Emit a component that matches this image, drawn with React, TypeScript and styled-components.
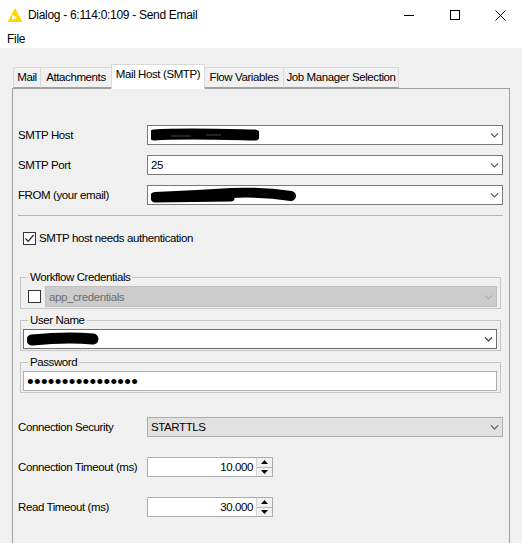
import React from 'react';
import styled, { createGlobalStyle } from 'styled-components';

const GlobalStyle = createGlobalStyle`
  html, body {
    margin: 0;
    padding: 0;
    background: #f0f0f0;
  }
  body {
    font-family: "Liberation Sans", Arial, sans-serif;
    font-size: 11.5px;
    letter-spacing: -0.4px;
    color: #000;
  }
  * {
    box-sizing: border-box;
  }
`;

const Window = styled.div`
  width: 522px;
  height: 543px;
  overflow: hidden;
  display: flex;
  flex-direction: column;
  background: #f0f0f0;
`;

const TitleBar = styled.div`
  height: 30px;
  flex-shrink: 0;
  background: #fff;
  display: flex;
  align-items: center;
`;

const AppIcon = styled.svg`
  width: 16px;
  height: 16px;
  margin-left: 7px;
  flex-shrink: 0;
`;

const Title = styled.div`
  margin-left: 5px;
  font-size: 12px;
  letter-spacing: -0.3px;
`;

const Controls = styled.div`
  margin-left: auto;
  display: flex;
  height: 100%;
`;

const ControlButton = styled.div<{ $w: number }>`
  width: ${(p) => p.$w}px;
  height: 100%;
  display: flex;
  align-items: center;
  justify-content: center;
`;

const MenuBar = styled.div`
  height: 18px;
  flex-shrink: 0;
  background: #fff;
  display: flex;
  align-items: center;
  padding-left: 7px;
  font-size: 12px;
  letter-spacing: -0.3px;
`;

const Body = styled.div`
  flex: 1;
  overflow: hidden;
  padding: 16px 12px 0 12px;
`;

const TabRow = styled.div`
  display: flex;
  align-items: flex-end;
  height: 24px;
  padding-left: 1px;
  position: relative;
  z-index: 1;
`;

const Tab = styled.div<{ $w: number; $active?: boolean }>`
  width: ${(p) => p.$w}px;
  height: ${(p) => (p.$active ? 25 : 21)}px;
  margin-left: -1px;
  margin-bottom: ${(p) => (p.$active ? -1 : 0)}px;
  border: 1px solid #d9d9d9;
  border-bottom: ${(p) => (p.$active ? 'none' : '1px solid #a0a0a0')};
  background: ${(p) => (p.$active ? '#fff' : '#f0f0f0')};
  display: flex;
  justify-content: center;
  padding-top: 3px;
  white-space: nowrap;
  &:first-child {
    margin-left: 0;
  }
`;

const Panel = styled.div`
  height: 480px;
  border: 1px solid #a0a0a0;
  padding: 36px 6px 0 5px;
  display: flex;
  flex-direction: column;
`;

const Row = styled.div<{ $gap?: number }>`
  display: flex;
  align-items: center;
  height: 20px;
  margin-top: ${(p) => p.$gap ?? 0}px;
`;

const Label = styled.div`
  width: 129px;
  flex-shrink: 0;
  white-space: nowrap;
`;

const Combo = styled.div<{ $tone?: 'normal' | 'disabled' | 'readonly' | 'dark'; $h?: number }>`
  flex: 1;
  height: ${(p) => p.$h ?? 20}px;
  display: flex;
  align-items: center;
  padding-left: 3px;
  overflow: hidden;
  white-space: nowrap;
  border: 1px solid
    ${(p) =>
      p.$tone === 'disabled' ? '#bfbfbf' : p.$tone === 'readonly' ? '#adadad' : p.$tone === 'dark' ? '#6e6e6e' : '#7a7a7a'};
  background: ${(p) => (p.$tone === 'disabled' ? '#cccccc' : p.$tone === 'readonly' ? '#e1e1e1' : '#fff')};
  color: ${(p) => (p.$tone === 'disabled' ? '#6d6d6d' : '#000')};
`;

const ComboText = styled.div`
  flex: 1;
  display: flex;
  align-items: center;
`;

const Chevron = styled.svg`
  width: 9px;
  height: 6px;
  margin-right: 3px;
  flex-shrink: 0;
`;

const Separator = styled.div`
  margin-top: 10px;
  height: 1px;
  background: #b4b4b4;
`;

const CheckRow = styled.div<{ $gap?: number; $pad?: number }>`
  display: flex;
  align-items: center;
  margin-top: ${(p) => p.$gap ?? 0}px;
  padding-left: ${(p) => p.$pad ?? 0}px;
  white-space: nowrap;
`;

const Box = styled.div`
  width: 13px;
  height: 13px;
  border: 1px solid #333;
  background: #fff;
  flex-shrink: 0;
  display: flex;
  align-items: center;
  justify-content: center;
`;

const CheckLabel = styled.span`
  margin-left: 3px;
  line-height: 16px;
`;

const Group = styled.fieldset<{ $gap: number }>`
  margin: ${(p) => p.$gap}px 2px 0 2px;
  padding: 1px 3px 1px 2px;
  border: 1px solid #c6c6c6;
  min-width: 0;
`;

const Legend = styled.legend`
  margin-left: 5px;
  padding: 0 2px;
  line-height: 16px;
`;

const GroupRow = styled.div`
  display: flex;
  align-items: center;
`;

const SmallBox = styled(Box)`
  margin: 0 4px 0 5px;
`;

const TextField = styled.div`
  height: 20px;
  border: 1px solid #abadb3;
  background: #fff;
  display: flex;
  align-items: center;
  padding-left: 3px;
`;

const Dots = styled.span`
  font-size: 19px;
  letter-spacing: 0.3px;
  line-height: 18px;
  margin-top: 1px;
`;

const Spinner = styled.div`
  width: 126px;
  height: 20px;
  border: 1px solid #abadb3;
  background: #fff;
  display: flex;
`;

const SpinValue = styled.div`
  flex: 1;
  padding-right: 3px;
  display: flex;
  align-items: center;
  justify-content: flex-end;
`;

const SpinButtons = styled.div`
  width: 16px;
  display: flex;
  flex-direction: column;
  border-left: 1px solid #d4d4d4;
`;

const SpinButton = styled.div<{ $down?: boolean }>`
  flex: 1;
  background: #f0f0f0;
  border-bottom: ${(p) => (p.$down ? 'none' : '1px solid #b9b9b9')};
  display: flex;
  align-items: center;
  justify-content: center;
`;

const Scribble = styled.svg`
  display: block;
`;

const tabs = [
  { label: 'Mail', w: 28 },
  { label: 'Attachments', w: 72 },
  { label: 'Mail Host (SMTP)', w: 94, active: true },
  { label: 'Flow Variables', w: 80 },
  { label: 'Job Manager Selection', w: 116 },
];

const Arrow: React.FC<{ color?: string }> = ({ color = '#5a5a5a' }) => (
  <Chevron viewBox="0 0 9 6">
    <path d="M1 1.5 L4.5 5 L8 1.5" fill="none" stroke={color} strokeWidth="1.1" />
  </Chevron>
);

const Check = () => (
  <svg width="11" height="11" viewBox="0 0 11 11">
    <path d="M1.5 5.5 L4.2 8.3 L9.5 2" fill="none" stroke="#222" strokeWidth="1.2" />
  </svg>
);

const Spin: React.FC<{ value: string }> = ({ value }) => (
  <Spinner>
    <SpinValue>{value}</SpinValue>
    <SpinButtons>
      <SpinButton>
        <svg width="7" height="4" viewBox="0 0 7 4">
          <polygon points="0,4 3.5,0 7,4" fill="#000" />
        </svg>
      </SpinButton>
      <SpinButton $down>
        <svg width="7" height="4" viewBox="0 0 7 4">
          <polygon points="0,0 3.5,4 7,0" fill="#000" />
        </svg>
      </SpinButton>
    </SpinButtons>
  </Spinner>
);

const App: React.FC = () => {
  return (
    <Window>
      <GlobalStyle />
      <TitleBar>
        <AppIcon viewBox="0 0 16 16">
          <polygon points="0.5,15 8,1 15.5,15" fill="#ffd600" />
          <polygon points="5,8 5,13 10,10.5" fill="#fff" />
        </AppIcon>
        <Title>Dialog - 6:114:0:109 - Send Email</Title>
        <Controls>
          <ControlButton $w={46}>
            <svg width="10" height="10" viewBox="0 0 10 10">
              <line x1="0" y1="5.5" x2="10" y2="5.5" stroke="#000" strokeWidth="1" />
            </svg>
          </ControlButton>
          <ControlButton $w={46}>
            <svg width="10" height="10" viewBox="0 0 10 10">
              <rect x="0.5" y="0.5" width="9" height="9" fill="none" stroke="#000" strokeWidth="1" />
            </svg>
          </ControlButton>
          <ControlButton $w={44}>
            <svg width="11" height="11" viewBox="0 0 11 11">
              <path d="M0.5 0.5 L10.5 10.5 M10.5 0.5 L0.5 10.5" stroke="#000" strokeWidth="1" />
            </svg>
          </ControlButton>
        </Controls>
      </TitleBar>
      <MenuBar>File</MenuBar>
      <Body>
        <TabRow>
          {tabs.map((t) => (
            <Tab key={t.label} $w={t.w} $active={t.active}>
              {t.label}
            </Tab>
          ))}
        </TabRow>
        <Panel>
          <Row>
            <Label>SMTP Host</Label>
            <Combo>
              <ComboText>
                <Scribble width="108" height="14" viewBox="0 0 108 14">
                  <path d="M3 7 C30 5, 60 6, 104 7" stroke="#000" strokeWidth="11" strokeLinecap="round" fill="none" />
                  <path d="M20 8 L40 8 M55 7 L70 7" stroke="#444" strokeWidth="1" />
                </Scribble>
              </ComboText>
              <Arrow />
            </Combo>
          </Row>
          <Row $gap={10}>
            <Label>SMTP Port</Label>
            <Combo>
              <ComboText>25</ComboText>
              <Arrow />
            </Combo>
          </Row>
          <Row $gap={10}>
            <Label>FROM (your email)</Label>
            <Combo>
              <ComboText>
                <Scribble width="145" height="16" viewBox="0 0 145 16">
                  <path d="M4 10 C30 9, 50 8, 80 6 C100 5, 120 6, 140 9" stroke="#000" strokeWidth="10" strokeLinecap="round" fill="none" />
                  <path d="M4 12 L80 11" stroke="#000" strokeWidth="7" strokeLinecap="round" />
                </Scribble>
              </ComboText>
              <Arrow />
            </Combo>
          </Row>
          <Separator />
          <CheckRow $gap={14} $pad={5}>
            <Box>
              <Check />
            </Box>
            <CheckLabel>SMTP host needs authentication</CheckLabel>
          </CheckRow>
          <Group $gap={23}>
            <Legend>Workflow Credentials</Legend>
            <GroupRow>
              <SmallBox />
              <Combo $tone="disabled" $h={21}>
                <ComboText>app_credentials</ComboText>
                <Arrow color="#b0b0b0" />
              </Combo>
            </GroupRow>
          </Group>
          <Group $gap={3}>
            <Legend>User Name</Legend>
            <GroupRow>
              <Combo $tone="dark">
                <ComboText>
                  <Scribble width="72" height="16" viewBox="0 0 72 16">
                    <path d="M5 9 C25 7, 45 6, 66 8" stroke="#000" strokeWidth="11" strokeLinecap="round" fill="none" />
                  </Scribble>
                </ComboText>
                <Arrow color="#333" />
              </Combo>
            </GroupRow>
          </Group>
          <Group $gap={3}>
            <Legend>Password</Legend>
            <TextField>
              <Dots>••••••••••••••••</Dots>
            </TextField>
          </Group>
          <Row $gap={24}>
            <Label>Connection Security</Label>
            <Combo $tone="readonly">
              <ComboText>STARTTLS</ComboText>
              <Arrow color="#606060" />
            </Combo>
          </Row>
          <Row $gap={20}>
            <Label>Connection Timeout (ms)</Label>
            <Spin value="10.000" />
          </Row>
          <Row $gap={20}>
            <Label>Read Timeout (ms)</Label>
            <Spin value="30.000" />
          </Row>
        </Panel>
      </Body>
    </Window>
  );
};

export default App;
